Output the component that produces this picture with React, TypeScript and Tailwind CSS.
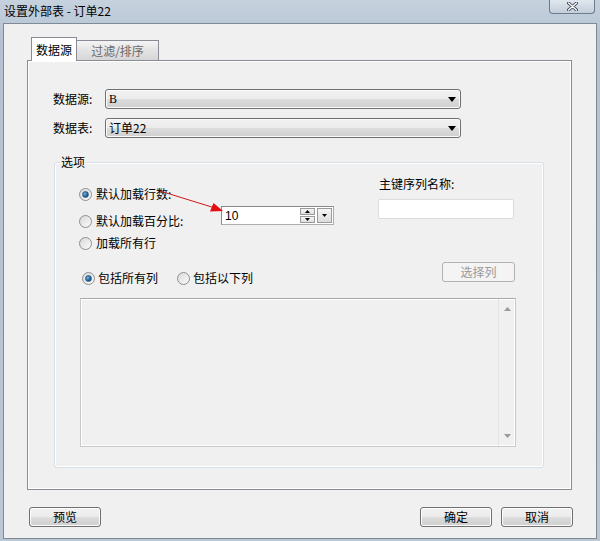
import React from 'react';

const font = { fontFamily: '"Noto Sans CJK SC", "Liberation Sans", sans-serif' };

const Radio = ({ checked = false }: { checked?: boolean }) => (
  <span className="w-[13px] h-[13px] rounded-full border border-[#8f8f8f] bg-gradient-to-br from-[#d9d9d9] to-[#fbfbfb] flex items-center justify-center shrink-0">
    {checked && (
      <span className="w-[7px] h-[7px] rounded-full bg-[radial-gradient(circle_at_35%_35%,#7fb4e0,#1c5a93_60%,#123f6b)] border border-[#2c628b]" />
    )}
  </span>
);

const WinButton = ({ label, width, disabled = false }: { label: string; width: string; disabled?: boolean }) => (
  <div
    className={`${width} h-[20px] rounded-[3px] border flex items-center justify-center text-[12px] ${
      disabled
        ? 'border-[#adb2b5] bg-[#f4f4f4] text-[#9a9a9a]'
        : 'border-[#707070] bg-[linear-gradient(#f2f2f2_0%,#ebebeb_50%,#dddddd_51%,#cfcfcf_100%)] text-black shadow-[inset_0_0_0_1px_#fcfcfc]'
    }`}
  >
    {label}
  </div>
);

const Combo = ({ value, serif = false }: { value: string; serif?: boolean }) => (
  <div className="w-[356px] h-[20px] rounded-[3px] border border-[#707070] bg-[linear-gradient(#f2f2f2_0%,#ebebeb_50%,#dddddd_51%,#cfcfcf_100%)] shadow-[inset_0_0_0_1px_#fbfbfb] flex items-center pl-[3px] pr-[4px]">
    <span
      className="flex-1 text-[12px] text-black"
      style={serif ? { fontFamily: '"Liberation Serif", serif' } : undefined}
    >
      {value}
    </span>
    <svg width="8" height="5" viewBox="0 0 8 5">
      <path d="M0 0 H8 L4 5 Z" fill="#000" />
    </svg>
  </div>
);

const Spinner = () => (
  <div className="w-[113px] h-[19px] flex items-center bg-white border border-[#abadb3] border-t-[#8a8a8a] border-l-[#8a8a8a]">
    <span className="flex-1 pl-[3px] text-[12px] text-black leading-none" style={{ fontFamily: '"Liberation Sans", sans-serif' }}>
      10
    </span>
    <div className="flex flex-col gap-[1px] mr-[2px]">
      <div className="w-[15px] h-[7px] border border-[#9a9a9a] bg-[linear-gradient(#f6f6f6,#dedede)] flex items-center justify-center">
        <svg width="5" height="3" viewBox="0 0 5 3"><path d="M0 3 H5 L2.5 0 Z" fill="#000" /></svg>
      </div>
      <div className="w-[15px] h-[7px] border border-[#9a9a9a] bg-[linear-gradient(#f6f6f6,#dedede)] flex items-center justify-center">
        <svg width="5" height="3" viewBox="0 0 5 3"><path d="M0 0 H5 L2.5 3 Z" fill="#000" /></svg>
      </div>
    </div>
    <div className="w-[15px] h-[15px] mr-[1px] border border-[#9a9a9a] bg-[linear-gradient(#f6f6f6,#dcdcdc)] flex items-center justify-center">
      <svg width="5" height="3" viewBox="0 0 5 3"><path d="M0 0 H5 L2.5 3 Z" fill="#000" /></svg>
    </div>
  </div>
);

export default function App() {
  return (
    <div
      className="w-[600px] h-[541px] overflow-hidden bg-[linear-gradient(#c6d2de,#b3c1d0_40px,#bac7d4)] flex flex-col"
      style={font}
    >
      {/* title bar */}
      <div className="h-[23px] flex items-start justify-between shrink-0">
        <span className="pl-[4px] pt-[1px] text-[12px] text-black leading-[20px]">设置外部表 - 订单22</span>
        <div className="w-[46px] h-[14px] mr-[5px] rounded-b-[4px] border border-t-0 border-[#6d7b8e] bg-[linear-gradient(#e0e7ee,#c3ceda)] flex items-center justify-center">
          <svg width="11" height="9" viewBox="0 0 11 9">
            <path d="M1.5 1 L9.5 8 M9.5 1 L1.5 8" stroke="#3c4656" strokeWidth="3" strokeLinecap="round" />
            <path d="M1.5 1 L9.5 8 M9.5 1 L1.5 8" stroke="#ffffff" strokeWidth="1.4" strokeLinecap="round" />
          </svg>
        </div>
      </div>

      {/* client area */}
      <div className="ml-[3px] w-[594px] h-[516px] border border-[#7f8a96] bg-[#f0f0f0] flex flex-col">
        <div className="ml-[23px] mt-[12px]">
          {/* tabs */}
          <div className="flex items-end pl-[4px] h-[24px]">
            <div className="relative z-10 w-[46px] h-[24px] -mb-px border border-b-0 border-[#898c95] bg-white flex items-center justify-center text-[12px] text-black">
              数据源
            </div>
            <div className="w-[82px] h-[20px] border border-l-0 border-b-0 border-[#898c95] bg-[linear-gradient(#f4f4f4,#e3e3e3_50%,#d6d6d6)] flex items-center justify-center text-[12px] text-[#6a6a6a]">
              过滤/排序
            </div>
          </div>

          {/* panel */}
          <div className="w-[545px] h-[430px] border border-[#898c95] shadow-[inset_0_0_0_1px_#ffffff] bg-[#f0f0f0] pt-[28px]">
            <div className="flex items-center pl-[25px]">
              <span className="w-[52px] text-[12px] text-black">数据源:</span>
              <Combo value="B" serif />
            </div>
            <div className="flex items-center pl-[25px] mt-[9px]">
              <span className="w-[52px] text-[12px] text-black">数据表:</span>
              <Combo value="订单22" />
            </div>

            {/* group box */}
            <div className="relative ml-[26px] mt-[24px] w-[490px] h-[306px] rounded-[3px] border border-[#d5dfe5] shadow-[inset_0_0_0_1px_#ffffff] pt-[13px]">
              <span className="absolute -top-[10px] left-[5px] px-[1px] bg-[#f0f0f0] text-[12px] text-black leading-[18px]">
                选项
              </span>

              <svg className="absolute left-0 top-0 overflow-visible" width="200" height="60">
                <line x1="105" y1="28" x2="160" y2="45" stroke="#d01818" strokeWidth="1" />
                <path d="M168 48 L155 48.5 L158.5 40 Z" fill="#e01010" />
              </svg>

              <div className="flex">
                <div className="w-[323px] pl-[24px]">
                  <div className="mt-[8px] h-[20px] flex items-center gap-[4px] text-[12px] text-black">
                    <Radio checked />
                    <span>默认加载行数:</span>
                  </div>
                  <div className="mt-[2px] flex items-start">
                    <div className="w-[142px] mt-[5px] h-[20px] flex items-center gap-[4px] text-[12px] text-black">
                      <Radio />
                      <span>默认加载百分比:</span>
                    </div>
                    <Spinner />
                  </div>
                  <div className="mt-[2px] h-[20px] flex items-center gap-[4px] text-[12px] text-black">
                    <Radio />
                    <span>加载所有行</span>
                  </div>
                </div>
                <div className="w-[136px]">
                  <div className="h-[16px] flex items-center text-[12px] text-black pl-[1px]">主键序列名称:</div>
                  <div className="mt-[7px] h-[20px] bg-white border border-[#dcdcdc] rounded-[2px]" />
                </div>
              </div>

              <div className="mt-[9px] h-[26px] flex pl-[27px] pr-[28px]">
                <div className="self-end h-[20px] flex items-center text-[12px] text-black">
                  <Radio checked />
                  <span className="ml-[3px]">包括所有列</span>
                  <span className="ml-[19px]"><Radio /></span>
                  <span className="ml-[3px]">包括以下列</span>
                </div>
                <div className="ml-auto self-start">
                  <WinButton label="选择列" width="w-[73px]" disabled />
                </div>
              </div>

              <div className="ml-[25px] mt-[10px] w-[436px] h-[149px] border border-[#c9c9c9] border-t-[#a8a8a8] shadow-[inset_0_0_0_1px_#ffffff] flex">
                <div className="flex-1" />
                <div className="w-[17px] border-l border-[#e4e4e4] flex flex-col items-center justify-between py-[8px]">
                  <svg width="7" height="4" viewBox="0 0 7 4"><path d="M0 4 H7 L3.5 0 Z" fill="#9a9a9a" /></svg>
                  <svg width="7" height="4" viewBox="0 0 7 4"><path d="M0 0 H7 L3.5 4 Z" fill="#9a9a9a" /></svg>
                </div>
              </div>
            </div>
          </div>
        </div>

        {/* bottom buttons */}
        <div className="mt-[17px] flex pl-[25px] pr-[23px]">
          <WinButton label="预览" width="w-[72px]" />
          <div className="ml-auto flex gap-[9px]">
            <WinButton label="确定" width="w-[72px]" />
            <WinButton label="取消" width="w-[72px]" />
          </div>
        </div>
      </div>
    </div>
  );
}
